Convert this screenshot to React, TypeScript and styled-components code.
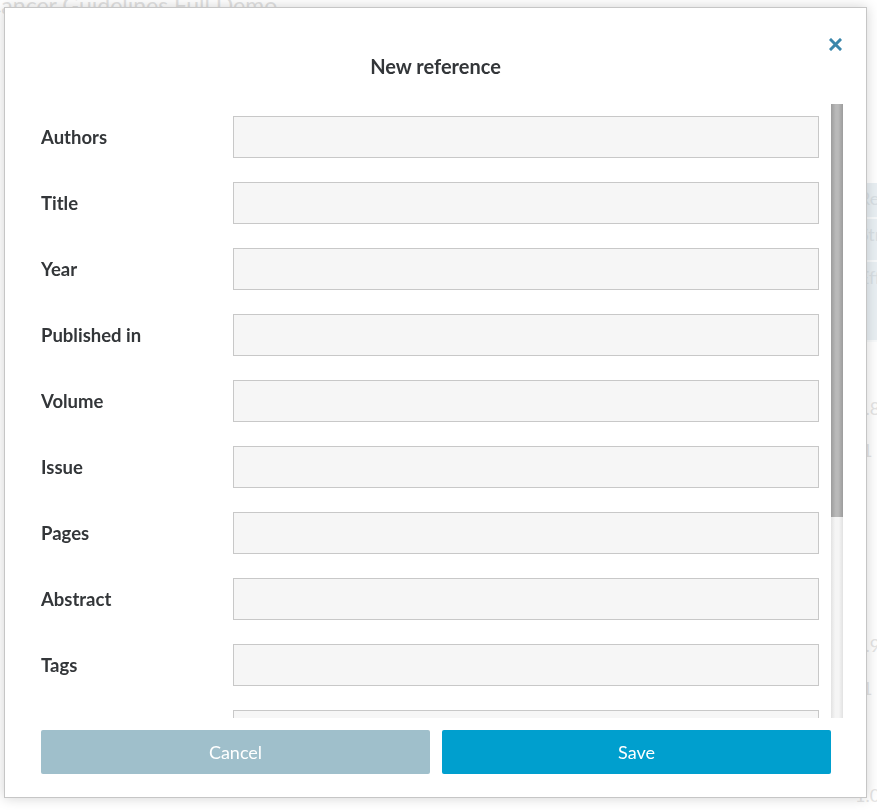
import React from 'react';
import styled, { createGlobalStyle } from 'styled-components';

const GlobalStyle = createGlobalStyle`
  html, body {
    margin: 0;
    padding: 0;
    height: 100%;
    overflow: hidden;
    background: #ffffff;
    font-family: 'Lato', 'Noto Sans', sans-serif;
  }
`;

const Page = styled.div`
  height: 810px;
  overflow: hidden;
  color: #c9c9c9;
`;

const PageTitle = styled.h1`
  margin: -9px 0 0 -14px;
  font-size: 23px;
  font-weight: 400;
  color: #d2d2d2;
  white-space: nowrap;
`;

const PageTable = styled.div`
  margin-top: 164px;
  margin-right: -40px;
  display: grid;
  grid-template-columns: 1fr 64px;
`;

const HeadCell = styled.div<{ $h: number }>`
  background: #dde7ed;
  border-bottom: 2px solid #f4f7f9;
  height: ${(p) => p.$h}px;
  font-size: 18px;
  line-height: 22px;
  color: #c4cfd6;
  padding: 4px 6px;
  box-sizing: border-box;
  text-align: center;
`;

const BodyCell = styled.div<{ $h: number; $indent?: boolean }>`
  height: ${(p) => p.$h}px;
  font-size: 18px;
  color: #d6d6d6;
  padding: 12px 2px 0 ${(p) => (p.$indent ? '9px' : '2px')};
  box-sizing: border-box;
`;

const Overlay = styled.div`
  position: fixed;
  inset: 0;
  background: rgba(255, 255, 255, 0.35);
`;

const Modal = styled.div`
  position: fixed;
  left: 4px;
  top: 7px;
  width: 863px;
  height: 791px;
  box-sizing: border-box;
  background: #ffffff;
  border: 1px solid #c6c6c6;
  box-shadow: 0 0 12px rgba(0, 0, 0, 0.18);
  display: flex;
  flex-direction: column;
`;

const Header = styled.div`
  height: 96px;
  flex: none;
  display: flex;
  align-items: center;
  justify-content: center;
  padding-top: 20px;
  box-sizing: border-box;
`;

const Title = styled.h2`
  margin: 0;
  font-size: 20px;
  font-weight: 700;
  color: #333639;
`;

const CloseButton = styled.button`
  position: absolute;
  top: 26px;
  right: 21px;
  width: 20px;
  height: 20px;
  padding: 0;
  border: none;
  background: none;
  cursor: pointer;
  display: flex;
  align-items: center;
  justify-content: center;
`;

const Body = styled.div`
  flex: 1;
  min-height: 0;
  display: flex;
  margin: 0 23px 0 36px;
`;

const ScrollArea = styled.div`
  flex: 1;
  overflow: hidden;
  padding: 12px 12px 0 0;
`;

const ScrollTrack = styled.div`
  width: 12px;
  flex: none;
  background: linear-gradient(to right, #e2e2e2, #f5f5f5 35%, #f5f5f5 65%, #e2e2e2);
`;

const ScrollThumb = styled.div`
  background: linear-gradient(to right, #9c9c9c, #b9b9b9 40%, #b9b9b9 60%, #9c9c9c);
`;

const Row = styled.div`
  display: flex;
  align-items: center;
  height: 42px;
  margin-bottom: 24px;
`;

const Label = styled.label`
  width: 192px;
  flex: none;
  font-size: 18.5px;
  font-weight: 700;
  color: #333639;
`;

const Input = styled.input`
  flex: 1;
  min-width: 0;
  height: 42px;
  box-sizing: border-box;
  border: 1px solid #c8c8c8;
  background: #f6f6f6;
  font: inherit;
  font-size: 16px;
  padding: 0 10px;
  outline: none;
`;

const Footer = styled.div`
  flex: none;
  display: flex;
  gap: 12px;
  padding: 12px 35px 23px 36px;
`;

const Button = styled.button<{ $primary?: boolean }>`
  flex: 1;
  height: 44px;
  border: none;
  border-radius: 2px;
  background: ${(p) => (p.$primary ? '#009fce' : '#9fbfcb')};
  color: #ffffff;
  font-family: 'Lato', 'Noto Sans', sans-serif;
  font-size: 18px;
  font-weight: 400;
  cursor: pointer;
`;

const fields = [
  'Authors',
  'Title',
  'Year',
  'Published in',
  'Volume',
  'Issue',
  'Pages',
  'Abstract',
  'Tags',
  'DOI',
  'URL',
  'Notes',
  'Language',
];

// visible part of the scroll area vs. full content height
const viewHeight = 614;
const contentHeight = 12 + fields.length * 66 + 43;
const thumbHeight = Math.round((viewHeight * viewHeight) / contentHeight);

const App = () => {
  return (
    <>
      <GlobalStyle />
      <Page>
        <PageTitle>Cancer Guidelines Full Demo</PageTitle>
        <PageTable>
          <div />
          <HeadCell $h={36}>Recommendation</HeadCell>
          <div />
          <HeadCell $h={43}>Strength</HeadCell>
          <div />
          <HeadCell $h={80}>Effective 0</HeadCell>
          <div />
          <BodyCell $h={43} />
          <div />
          <BodyCell $h={42}>1.8</BodyCell>
          <div />
          <BodyCell $h={195} $indent>1</BodyCell>
          <div />
          <BodyCell $h={43}>1.9</BodyCell>
          <div />
          <BodyCell $h={107} $indent>1</BodyCell>
          <div />
          <BodyCell $h={44}>1.0</BodyCell>
        </PageTable>
      </Page>
      <Overlay />
      <Modal role="dialog" aria-label="New reference">
        <Header>
          <Title>New reference</Title>
        </Header>
        <CloseButton aria-label="Close">
          <svg width="13" height="13" viewBox="0 0 13 13">
            <path d="M2 2 L11 11 M11 2 L2 11" stroke="#3a86ab" strokeWidth="3" strokeLinecap="square" />
          </svg>
        </CloseButton>
        <Body>
          <ScrollArea>
            {fields.map((f) => (
              <Row key={f}>
                <Label>{f}</Label>
                <Input type="text" />
              </Row>
            ))}
          </ScrollArea>
          <ScrollTrack>
            <ScrollThumb style={{ height: thumbHeight }} />
          </ScrollTrack>
        </Body>
        <Footer>
          <Button>Cancel</Button>
          <Button $primary>Save</Button>
        </Footer>
      </Modal>
    </>
  );
};

export default App;
